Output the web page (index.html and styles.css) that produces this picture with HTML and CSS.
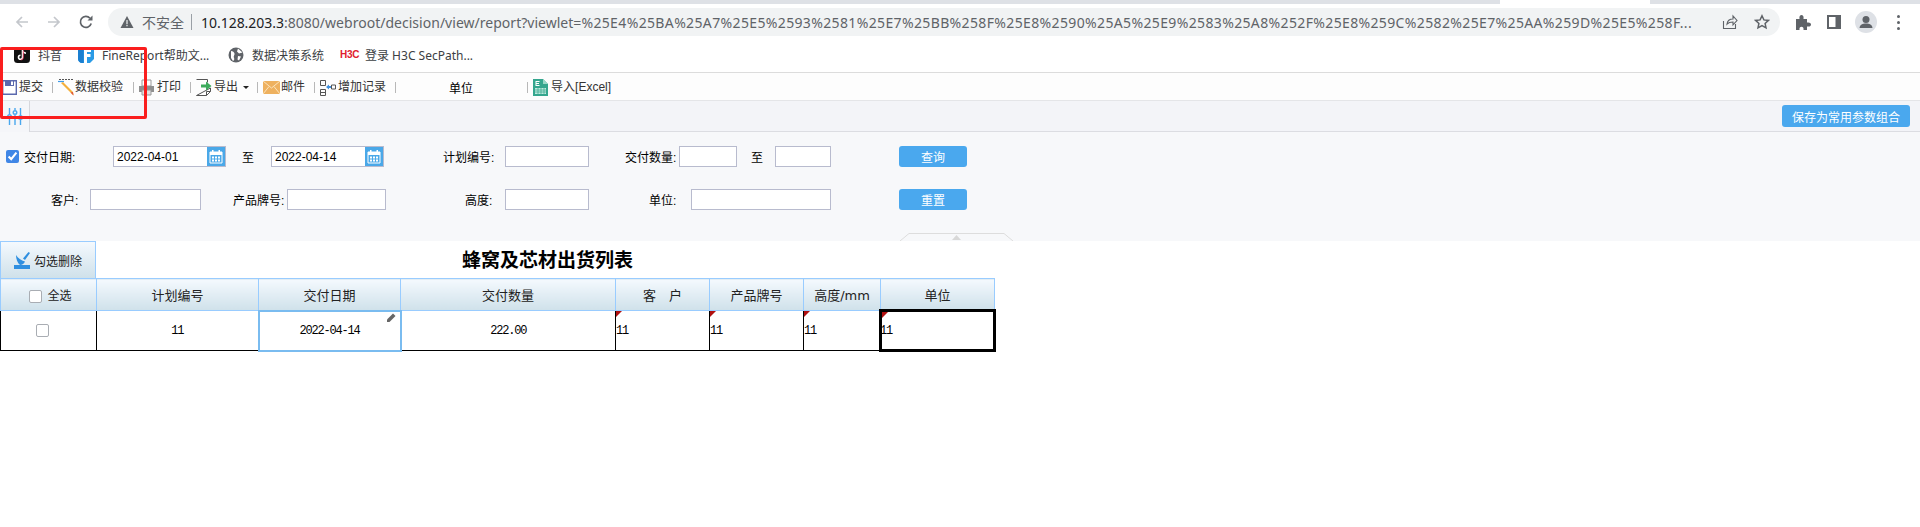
FILE: index.html
```html
<!DOCTYPE html>
<html lang="zh">
<head>
<meta charset="utf-8">
<title>蜂窝及芯材出货列表</title>
<link rel="stylesheet" href="styles.css">
</head>
<body>
<div class="tabstrip"><div class="tab-gap"></div></div>
<header class="browser-bar">
  <svg class="nav nav-back" viewBox="0 0 16 16"><path d="M14 8H3M8 3 3 8l5 5" fill="none" stroke="#c4c7cc" stroke-width="1.7"/></svg>
  <svg class="nav nav-fwd" viewBox="0 0 16 16"><path d="M2 8h11M8 3l5 5-5 5" fill="none" stroke="#c4c7cc" stroke-width="1.7"/></svg>
  <svg class="nav nav-reload" viewBox="0 0 16 16"><path d="M13.2 9.500A5.500 5.500 0 1 1 12 4.200" fill="none" stroke="#5f6368" stroke-width="1.7"/><path d="M14.500 1.500v5h-5z" fill="#5f6368"/></svg>
  <div class="omnibox">
    <svg class="warn" viewBox="0 0 14 14"><path d="M7 1 13.500 13H.5z" fill="#5f6368"/><path d="M6.400 5h1.200v4.200H6.400zM6.400 10h1.200v1.300H6.400z" fill="#f1f3f4"/></svg>
    <span class="insecure">不安全</span>
    <span class="divider"></span>
    <span class="url"><b>10.128.203.3</b>:8080/webroot/decision/view/report?viewlet=<span class="url-query">%25E4%25BA%25A7%25E5%2593%2581%25E7%25BB%258F%25E8%2590%25A5%25E9%2583%25A8%252F%25E8%259C%2582%25E7%25AA%259D%25E5%258F...</span></span>
    <svg class="omni-icon share" viewBox="0 0 16 16"><path d="M1.500 7v7.500h12V10M5 10c.5-3.500 3-5 6-5V2l4 4.500-4 4.300V8c-2.500 0-4.500.4-6 2z" fill="none" stroke="#5f6368" stroke-width="1.100"/></svg>
    <svg class="omni-icon star" viewBox="0 0 16 16"><path d="m8 1.800 1.900 4.100 4.500.5-3.300 3 .9 4.500L8 11.700l-4 2.200.9-4.500-3.300-3 4.500-.5z" fill="none" stroke="#5f6368" stroke-width="1.500"/></svg>
  </div>
  <svg class="ext" viewBox="0 0 16 16"><path d="M1 5h3.500C4 2 5.200 1 6.500 1S9 2 8.500 5H12v3.500c3-.5 4 .7 4 2s-1 2.500-4 2V16H8.500c.4-2.500-.7-3.300-2-3.300s-2.400.8-2 3.300H1z" fill="#5f6368"/></svg>
  <svg class="panel" viewBox="0 0 14 14"><path d="M0 0h14v14H0z" fill="#5f6368"/><path d="M2 2h6.500v10H2z" fill="#fff"/></svg>
  <div class="avatar"><svg viewBox="0 0 22 22"><circle cx="11" cy="8.500" r="3.500" fill="#5f6368"/><path d="M4.500 17c.5-3.500 3-4.500 6.500-4.500s6 1 6.500 4.500z" fill="#5f6368"/></svg></div>
  <div class="kebab"><i></i><i></i><i></i></div>
</header>
<nav class="bookmarks">
  <svg class="bm-icon" viewBox="0 0 16 16"><rect width="16" height="16" rx="3.500" fill="#111"/><path d="M8.500 3v7.300a2 2 0 1 1-2-2M8.500 3c.3 2 1.500 3 3.500 3.200" fill="none" stroke="#fff" stroke-width="1.600"/><path d="M9.300 3.500v7a2.500 2.500 0 0 1-2.500 2.500" fill="none" stroke="#e5284f" stroke-width=".8"/></svg>
  <span class="bm-text w-23">抖音</span>
  <svg class="bm-icon m-17" viewBox="0 0 16 16"><path d="M1 0h14a1 1 0 0 1 1 1v11l-4 4H4c-2 0-4-2-4-4V1a1 1 0 0 1 1-1z" fill="#2a9be6"/><path d="M6 2h7v3H9v2h3.500v3H9v6H6z" fill="#fff"/><path d="M0 0h5.500v16H4c-2 0-4-2-4-4z" fill="#1b7fd0"/></svg>
  <span class="bm-text w-108">FineReport帮助文...</span>
  <svg class="bm-icon m-18" viewBox="0 0 16 16"><circle cx="8" cy="8" r="7.500" fill="#5f6368"/><path d="M3 4c2 0 3 1 3.500 2.500S5 9 6 11s-1 3-1 3l-2-3zM10 1.500l-1 3 2 2 3.500-1zM10 9l3 .5-2 4-1.500-1z" fill="#fff"/></svg>
  <span class="bm-text w-73">数据决策系统</span>
  <span class="h3c">H3C</span>
  <span class="bm-text">登录 H3C SecPath...</span>
</nav>
<div class="toolbar">
  <div class="tool tool-save">
    <svg viewBox="0 0 15 15"><path d="M.7.700h13.600v13.600H.7z" fill="#fff" stroke="#5a68ad" stroke-width="1.400"/><path d="M3 .7h9v5.300H3z" fill="#5a68ad"/><path d="M9 1.500h2v3.500H9z" fill="#fff"/></svg>
    <span>提交</span>
  </div>
  <i class="sep"></i>
  <div class="tool tool-check">
    <svg viewBox="0 0 17 17"><path d="M1 .5h15" stroke="#555" stroke-dasharray="2 1"/><path d="M0 2.500h6" stroke="#3f9be8" stroke-width="1.200"/><path d="m3 4 9.500 9.500 3 3-.5-3.500L5 3z" fill="#f4b03c"/><path d="m12.500 13.500 3 3-.5-3.500z" fill="#e0563c"/></svg>
    <span>数据校验</span>
  </div>
  <i class="sep sep-10"></i>
  <div class="tool tool-print">
    <svg viewBox="0 0 17 17"><path d="M4 1h9v6H4z" fill="#fff" stroke="#999"/><path d="M1 7h15v6H1z" fill="#8f8f8f"/><path d="M4 11h9v5H4z" fill="#e2e2e2" stroke="#999"/></svg>
    <span>打印</span>
  </div>
  <i class="sep"></i>
  <div class="tool tool-export">
    <svg viewBox="0 0 16 17"><path d="M.5.500h11v3M14.500 9v3.500l-4 4H.5z" fill="#fff" stroke="#555"/><path d="M10.500 16.500v-4h4" fill="none" stroke="#555"/><path d="M5 5.500h5V2.500l5.500 4.500L10 11.500V8.500H5z" fill="#3dab5c"/></svg>
    <span>导出</span><em class="caret"></em>
  </div>
  <i class="sep sep-8"></i>
  <div class="tool tool-mail">
    <svg viewBox="0 0 17 13"><path d="M0 0h17v13H0z" fill="#eeb15f"/><path d="m0 0 8.500 7L17 0M0 13l6-7.500M17 13l-6-7.500" fill="none" stroke="#fbe3bd"/></svg>
    <span>邮件</span>
  </div>
  <i class="sep"></i>
  <div class="tool tool-add">
    <svg viewBox="0 0 16 16"><path d="M.5.500h5v5h-5zM.5 9.500h5v6h-5zM.5 12.500h5" fill="none" stroke="#555"/><path d="M6 7l3-2.500V6h2v2H9v1.500z" fill="#3f8fdd"/><path d="M11.500 5h4v4h-4z" fill="none" stroke="#555"/></svg>
    <span>增加记录</span>
  </div>
  <i class="sep"></i>
  <span class="tool-plain">单位</span>
  <i class="sep sep-far"></i>
  <div class="tool tool-excel">
    <svg viewBox="0 0 15 17"><path d="M0 0h10l5 5v12H0z" fill="#35a68e"/><path d="M10 0v5h5z" fill="#9ad8c8"/><path d="M2.500 2h4v1H3.500v1H6v1H3.500v1H6.500v1h-4z" fill="#fff"/><path d="M2 9h11v6H2z" fill="#bfe8dd"/><path d="M2 11h11M2 13h11M5 9v6M8 9v6M11 9v6" stroke="#35a68e" stroke-width=".7"/></svg>
    <span>导入[Excel]</span>
  </div>
</div>
<div class="tabbar">
  <div class="tabbar-tab">
    <svg viewBox="0 0 16 17"><g fill="none" stroke="#4aa8ee" stroke-width="1.400"><path d="M2.500 0v6M2.500 11v6M8 0v2M8 7v10M13.500 0v7M13.500 12v5"/><circle cx="2.500" cy="8.500" r="1.800"/><circle cx="8" cy="4.500" r="1.800"/><circle cx="13.500" cy="9.500" r="1.800"/></g></svg>
  </div>
  <button class="btn btn-save">保存为常用参数组合</button>
</div>
<section class="form">
  <div class="form-row">
    <input class="check m-6" type="checkbox" checked>
    <label class="lbl m-5 w-52">交付日期:</label>
    <div class="date m-37"><input class="field" value="2022-04-01"><span class="cal"><svg viewBox="0 0 14 14"><path d="M1 2h12v11H1z" fill="none" stroke="#fff"/><path d="M1 2h12v3H1zM3 0h1.500v2H3zM9.500 0H11v2H9.500z" fill="#fff"/><path d="M3 6.500h2v2H3zM6 6.500h2v2H6zM9 6.500h2v2H9zM3 9.500h2v2H3zM6 9.500h2v2H6zM9 9.500h2v2H9z" fill="#fff"/></svg></span></div>
    <span class="lbl m-16 w-12">至</span>
    <div class="date m-17"><input class="field" value="2022-04-14"><span class="cal"><svg viewBox="0 0 14 14"><path d="M1 2h12v11H1z" fill="none" stroke="#fff"/><path d="M1 2h12v3H1zM3 0h1.500v2H3zM9.500 0H11v2H9.500z" fill="#fff"/><path d="M3 6.500h2v2H3zM6 6.500h2v2H6zM9 6.500h2v2H9zM3 9.500h2v2H3zM6 9.500h2v2H6zM9 9.500h2v2H9z" fill="#fff"/></svg></span></div>
    <label class="lbl m-59 w-52">计划编号:</label>
    <input class="field m-10 w-84">
    <label class="lbl m-36 w-52">交付数量:</label>
    <input class="field m-2 w-58">
    <span class="lbl m-14 w-12">至</span>
    <input class="field m-12 w-56">
    <button class="btn btn-form m-68">查询</button>
  </div>
  <div class="form-row">
    <label class="lbl m-51 w-29">客户:</label>
    <input class="field m-10 w-111">
    <label class="lbl m-32 w-52">产品牌号:</label>
    <input class="field m-2 w-99">
    <label class="lbl m-79 w-28">高度:</label>
    <input class="field m-12 w-84">
    <label class="lbl m-60 w-28">单位:</label>
    <input class="field m-14 w-140">
    <button class="btn btn-form m-68">重置</button>
  </div>
  <svg class="collapse" viewBox="0 0 113 8"><path d="M0 8 9 .5h95l9 7.500" fill="#f7f8fa" stroke="#ddd"/><path d="M52 7l4.500-5L61 7z" fill="#d8d8d8"/></svg>
</section>
<main class="report">
  <div class="report-head">
    <button class="btn-del">
      <svg viewBox="0 0 17 17"><path d="M0 13h16v4H0z" fill="#2f8fe0"/><path d="M2 3c2 3 5 5.500 9 6.500-1 2-2.500 3.500-5 3.500-2.500-2-4-6-4-10zM9 6.500 14.500 0l1.500 1-5 7z" fill="#2f8fe0"/></svg>
      勾选删除
    </button>
    <h1 class="title">蜂窝及芯材出货列表</h1>
  </div>
  <table class="grid">
    <colgroup><col class="c1"><col class="c2"><col class="c3"><col class="c4"><col class="c5"><col class="c5"><col class="c6"><col class="c7"></colgroup>
    <thead>
      <tr>
        <th class="th-all"><input class="check check-plain" type="checkbox"><span>全选</span></th>
        <th>计划编号</th><th>交付日期</th><th>交付数量</th><th>客　户</th><th>产品牌号</th><th>高度<span class="latin">/mm</span></th><th>单位</th>
      </tr>
    </thead>
    <tbody>
      <tr>
        <td class="cell-check"><input class="check check-plain" type="checkbox"></td>
        <td>11</td>
        <td class="cell-active">2022-04-14<svg class="pen" viewBox="0 0 9 9"><path d="M0 9V6.500L6 .5 8.500 3 2.500 9z" fill="#666"/></svg></td>
        <td>222.00</td>
        <td class="flag">11</td><td class="flag">11</td><td class="flag">11</td><td class="flag cell-current">11</td>
      </tr>
    </tbody>
  </table>
</main>
<div class="annotation"></div>
</body>
</html>
```
FILE: styles.css
```css
* { box-sizing: border-box; }
html, body { margin: 0; padding: 0; }
body {
  position: relative;
  width: 1920px;
  height: 527px;
  overflow: hidden;
  background: #fff;
  color: #000;
  font-family: "Liberation Sans", "Noto Sans CJK SC", sans-serif;
  font-size: 12px;
}
button { font-family: inherit; padding: 0; cursor: pointer; }

/* browser chrome */
.tabstrip { height: 4px; background: #dee1e6; display: flex; }
.tab-gap { width: 150px; margin-left: 1500px; background: #fff; }
.browser-bar { height: 36px; display: flex; align-items: center; background: #fff; }
.nav { width: 16px; height: 16px; flex: none; }
.nav-back { margin-left: 14px; }
.nav-fwd { margin-left: 16px; }
.nav-reload { margin-left: 16px; }
.omnibox {
  width: 1672px; height: 28px; margin-left: 14px; flex: none;
  display: flex; align-items: center;
  background: #f1f3f4; border-radius: 14px;
  font-family: "Noto Sans", "Noto Sans CJK SC", sans-serif;
}
.warn { width: 14px; height: 14px; margin-left: 12px; flex: none; }
.insecure { margin-left: 8px; width: 42px; font-size: 14px; color: #5f6368; white-space: nowrap; }
.divider { width: 1px; height: 16px; margin-left: 7px; background: #9aa0a6; flex: none; }
.url { margin-left: 9px; width: 1505px; flex: none; font-size: 14px; color: #5f6368; white-space: nowrap; overflow: hidden; letter-spacing: .02px; }
.url b { font-weight: 400; color: #202124; letter-spacing: -.03px; }
.url-query { letter-spacing: .36px; }
.omni-icon { width: 16px; height: 16px; flex: none; }
.share { margin-left: 16px; }
.star { margin-left: 16px; }
.ext { width: 16px; height: 16px; margin-left: 15px; flex: none; }
.panel { width: 14px; height: 14px; margin-left: 16px; flex: none; }
.avatar { width: 22px; height: 22px; margin-left: 14px; border-radius: 50%; background: #dee1e6; flex: none; }
.avatar svg { display: block; width: 22px; height: 22px; }
.kebab { margin-left: 20px; display: flex; flex-direction: column; gap: 3px; }
.kebab i { display: block; width: 3px; height: 3px; border-radius: 50%; background: #5f6368; }

.bookmarks {
  height: 33px; display: flex; align-items: center;
  padding: 0 0 3px 14px;
  border-bottom: 1px solid #dcdcdc;
  color: #3c4043;
  font-family: "Noto Sans", "Noto Sans CJK SC", sans-serif;
}
.bm-icon { width: 16px; height: 16px; flex: none; }
.bm-text { margin-left: 8px; white-space: nowrap; font-size: 12px; }
.h3c { margin-left: 15px; width: 17px; color: #e0202e; font: 700 10px "Liberation Sans", sans-serif; white-space: nowrap; letter-spacing: -.3px; }

/* report toolbar */
.toolbar {
  height: 28px; display: flex; align-items: center;
  padding-top: 2px;
  border-bottom: 1px solid #e4e5e8;
  color: #333;
  background: #fdfdfd;
}
.tool { display: flex; align-items: center; white-space: nowrap; gap: 2px; margin-left: 5px; flex: none; }
.tool svg { width: 17px; height: 17px; flex: none; }
.tool span { line-height: 17px; }
.tool-save { margin-left: 2px; }
.tool-save svg { width: 15px; height: 15px; }
.tool-check { gap: 0; }
.tool-print { margin-left: 4px; }
.tool-export svg { width: 16px; height: 17px; }
.tool-mail { gap: 1px; }
.tool-mail svg { height: 13px; }
.tool-add svg { width: 16px; height: 16px; }
.tool-excel { gap: 3px; }
.tool-excel svg { width: 15px; height: 17px; }
.caret { width: 0; height: 0; margin-left: 3px; border: 3px solid transparent; border-top: 3px solid #222; border-bottom: 0; }
.sep { width: 1px; height: 11px; margin-left: 9px; background: #b8b8b8; flex: none; }
.sep-8 { margin-left: 8px; }
.sep-10 { margin-left: 10px; }
.tool-plain { margin-left: 53px; color: #000; flex: none; }
.sep-far { margin-left: 54px; }

.tabbar {
  height: 31px; display: flex; align-items: center; justify-content: space-between;
  padding-right: 10px;
  background: #f3f4f8;
  border-bottom: 1px solid #dcdde2;
}
.tabbar-tab { width: 30px; height: 31px; padding: 7px 0 0 7px; background: #f5f6f9; border-right: 1px solid #d6d7dc; }
.tabbar-tab svg { display: block; width: 16px; height: 17px; }
.btn { border: 0; border-radius: 3px; background: #4aa8ee; color: #fff; font-size: 12px; }
.btn-save { width: 128px; height: 22px; }

/* parameter form */
.form { position: relative; height: 109px; padding-top: 14px; background: #f7f8fa; }
.form-row { display: flex; align-items: center; height: 21px; margin-bottom: 22px; }
.lbl { flex: none; font-size: 12px; white-space: nowrap; color: #000; }
.field {
  display: block; flex: none; height: 21px; padding: 0 0 0 3px;
  border: 1px solid #b8bbce; background: #fff;
  font: 12px "Liberation Sans", sans-serif; color: #000; outline: 0;
}
.date { display: flex; flex: none; width: 113px; height: 21px; }
.date .field { width: 94px; border-right: 0; }
.cal { width: 19px; height: 21px; background: #4aa8e8; border: 1px solid #b8bbce; border-left: 0; display: flex; align-items: center; justify-content: center; }
.cal svg { width: 14px; height: 14px; }
.btn-form { flex: none; width: 68px; height: 21px; }
.check { flex: none; width: 13px; height: 13px; margin: 0; accent-color: #3f86e6; }
.check-plain { appearance: none; border: 1px solid #a9adb3; border-radius: 2px; background: #fff; vertical-align: middle; }
.collapse { position: absolute; left: 900px; bottom: 0; width: 113px; height: 8px; display: block; }

/* spacing / width scale used by the form's free layout */
.m-2 { margin-left: 2px; } .m-5 { margin-left: 5px; } .m-6 { margin-left: 6px; }
.m-10 { margin-left: 10px; } .m-12 { margin-left: 12px; } .m-14 { margin-left: 14px; }
.m-16 { margin-left: 16px; } .m-17 { margin-left: 17px; } .m-18 { margin-left: 18px; }
.m-32 { margin-left: 32px; } .m-36 { margin-left: 36px; } .m-37 { margin-left: 37px; }
.m-51 { margin-left: 51px; } .m-59 { margin-left: 59px; } .m-60 { margin-left: 60px; }
.m-68 { margin-left: 68px; } .m-79 { margin-left: 79px; }
.w-12 { width: 12px; } .w-23 { width: 23px; } .w-28 { width: 28px; } .w-29 { width: 29px; }
.w-52 { width: 52px; } .w-56 { width: 56px; } .w-58 { width: 58px; } .w-73 { width: 73px; }
.w-84 { width: 84px; } .w-99 { width: 99px; } .w-108 { width: 108px; } .w-111 { width: 111px; } .w-140 { width: 140px; }

/* report */
.report-head { display: flex; height: 37px; }
.btn-del {
  width: 96px; height: 37px; display: flex; align-items: center; justify-content: center; gap: 3px;
  border: 1px solid #99ccff; border-bottom: 0;
  background: linear-gradient(#f4f9fe, #cfe1ea);
  color: #222; font-size: 12px;
  flex: none;
}
.btn-del svg { width: 17px; height: 17px; }
.title { margin: 0 0 0 366px; font-size: 19px; line-height: 39px; font-weight: 700; color: #000; white-space: nowrap; }
.grid { border-collapse: collapse; table-layout: fixed; width: 994px; }
.c1 { width: 96px; } .c2 { width: 162px; } .c3 { width: 142px; } .c4 { width: 215px; }
.c5 { width: 94px; } .c6 { width: 77px; } .c7 { width: 114px; }
.grid th {
  height: 32px; padding: 0;
  border: 1px solid #99ccff;
  background: linear-gradient(#f4f9fe, #cfe1ea);
  font-size: 13px; font-weight: 400; color: #222; text-align: center;
}
.grid th.th-all { font-size: 12px; padding-left: 4px; }
.th-all span { margin-left: 5px; }
.latin { font-family: "DejaVu Sans", sans-serif; }
.grid td {
  position: relative; height: 40px; padding: 0;
  border: 1px solid #000;
  font: 12px "Liberation Mono", monospace; letter-spacing: -1.2px; text-align: center; color: #000;
}
.grid td.cell-check { padding-right: 12px; }
.grid td.flag { text-align: left; }
.grid td.flag::before {
  content: ""; position: absolute; left: 0; top: 0;
  border-top: 6px solid #b01010; border-right: 6px solid transparent;
}
.grid td.cell-active { border: 2px solid #7abcf0; }
.grid td.cell-current { border: 3px solid #000; text-indent: -2px; }
.pen { position: absolute; right: 4px; top: 1px; width: 9px; height: 9px; }

/* red annotation box drawn over the screenshot */
.annotation { position: absolute; left: 0; top: 47px; width: 147px; height: 72px; border: 3px solid #fa1e1e; border-radius: 2px; }
```
